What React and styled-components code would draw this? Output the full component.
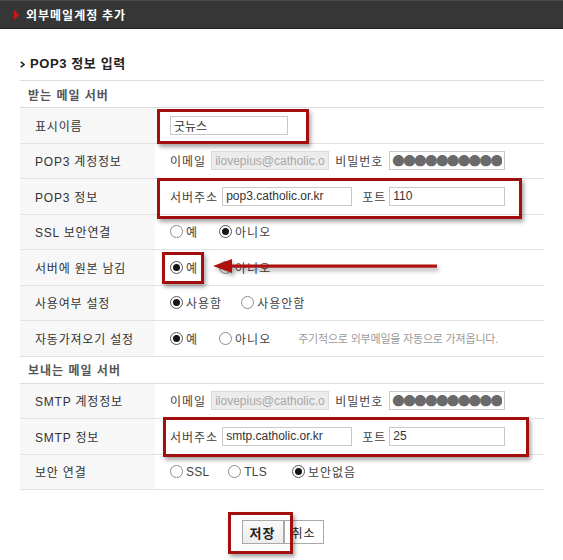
import React from 'react';
import styled, { createGlobalStyle } from 'styled-components';

const Global = createGlobalStyle`
  html, body { margin: 0; padding: 0; background: #fff; overflow: hidden; }
  body {
    font-family: "Liberation Sans", "Noto Sans CJK KR", sans-serif;
    font-size: 12px;
    color: #333;
  }
`;

const Page = styled.div`
  position: relative;
  width: 563px;
  height: 560px;
`;

const TitleBar = styled.div`
  height: 29px;
  box-sizing: border-box;
  background: #363636;
  border-top: 1px solid #4c4c4c;
  border-bottom: 1px solid #1e1e1e;
  display: flex;
  align-items: center;
  padding-left: 14px;
  gap: 7px;
  color: #fff;
  font-weight: bold;
  font-size: 12px;
  letter-spacing: 1px;
  font-family: "Noto Sans CJK KR", sans-serif;
`;

const RedTri = styled.span`
  width: 0;
  height: 0;
  border-left: 5px solid #d41414;
  border-top: 5px solid transparent;
  border-bottom: 5px solid transparent;
`;

const Content = styled.div`
  margin: 0 19px 0 20px;
`;

const SectionTitle = styled.div`
  display: flex;
  align-items: center;
  gap: 5px;
  padding: 27px 0 8px 0;
  line-height: 16px;
  font-size: 13px;
  font-weight: bold;
  letter-spacing: 0.6px;
  color: #222;
  border-bottom: 1px solid #dcdcdc;
`;

const GroupRow = styled.div`
  height: 27px;
  box-sizing: border-box;
  border-bottom: 1px solid #dcdcdc;
  display: flex;
  align-items: center;
  padding-left: 8px;
  font-weight: bold;
  letter-spacing: 1px;
  color: #555;
`;

const Row = styled.div`
  display: grid;
  grid-template-columns: 135px 1fr;
  height: 35.5px;
  box-sizing: border-box;
  border-bottom: 1px solid #e2e2e2;
`;

const Label = styled.div`
  background: #f7f7f7;
  padding-left: 15px;
  display: flex;
  align-items: center;
  letter-spacing: 0.8px;
  color: #333;
`;

const Value = styled.div`
  padding-left: 15px;
  display: flex;
  align-items: center;
  color: #444;
`;

const FieldLabel = styled.span`
  margin-left: ${p => p.$ml || 0}px;
  margin-right: ${p => p.$mr || 5}px;
  letter-spacing: 1px;
  color: #444;
`;

const TextInput = styled.input`
  width: ${p => p.$w}px;
  height: 19px;
  box-sizing: border-box;
  border: 1px solid ${p => (p.$disabled ? '#dadada' : '#c9c9c9')};
  background: ${p => (p.$disabled ? '#ececec' : '#fff')};
  color: ${p => (p.$disabled ? '#a8a8a8' : '#333')};
  padding: 0 3px;
  font-family: "Liberation Sans", "Noto Sans CJK KR", sans-serif;
  font-size: 12px;
  outline: none;
  margin: 0;
`;

const DotsInput = styled(TextInput)`
  font-family: "Noto Sans CJK KR", sans-serif;
  font-size: 12.5px;
  color: #6a6a6a;
  letter-spacing: -1.6px;
  padding: 0 2px;
`;

const Option = styled.span`
  display: inline-flex;
  align-items: center;
  margin-right: ${p => p.$gap || 0}px;
  letter-spacing: ${p => (p.$latin ? 0.2 : 1)}px;
  color: #444;
`;

const Radio = styled.span`
  width: 13px;
  height: 13px;
  box-sizing: border-box;
  border-radius: 50%;
  border: 1px solid ${p => (p.$on ? '#555' : '#8c8c8c')};
  background: #fff;
  display: inline-flex;
  align-items: center;
  justify-content: center;
  margin-right: 3px;
  &::after {
    content: '';
    width: 7px;
    height: 7px;
    border-radius: 50%;
    background: ${p => (p.$on ? '#161616' : 'transparent')};
  }
`;

const Note = styled.span`
  color: #9a9a9a;
  font-size: 11px;
  letter-spacing: -0.2px;
  margin-left: ${p => p.$ml || 0}px;
`;

const Footer = styled.div`
  display: flex;
  justify-content: center;
  margin-top: 30px;
  padding-left: 1px;
`;

const Button = styled.button`
  height: 24px;
  width: ${p => p.$w}px;
  box-sizing: border-box;
  border: 1px solid #a9a9a9;
  background: ${p => (p.$primary ? 'linear-gradient(#fafafa, #ececec)' : '#fff')};
  font-family: "Noto Sans CJK KR", sans-serif;
  font-size: ${p => (p.$primary ? 13 : 12)}px;
  font-weight: ${p => (p.$primary ? 'bold' : 'normal')};
  letter-spacing: 1px;
  color: #222;
  padding: 0;
  margin: 0;
`;

const RedBox = styled.div`
  position: absolute;
  left: ${p => p.$x}px;
  top: ${p => p.$y}px;
  width: ${p => p.$w}px;
  height: ${p => p.$h}px;
  box-sizing: border-box;
  border: 3px solid #a30f0f;
  box-shadow: 2px 3px 4px rgba(0, 0, 0, 0.35);
  pointer-events: none;
`;

const ArrowSvg = styled.svg`
  position: absolute;
  left: 210px;
  top: 256px;
  overflow: visible;
  filter: drop-shadow(2px 3px 2px rgba(0, 0, 0, 0.35));
  pointer-events: none;
`;

const Chevron = () => (
  <svg width="5" height="7" viewBox="0 0 5 7">
    <path d="M0.8 0.8 L4 3.5 L0.8 6.2" fill="none" stroke="#222" strokeWidth="1.6" />
  </svg>
);

const RadioOpt = ({ on, gap, latin, children }) => (
  <Option $gap={gap} $latin={latin}>
    <Radio $on={on} />
    {children}
  </Option>
);

const DOTS = '●●●●●●●●●●●●●●';

export default function App() {
  return (
    <Page>
      <Global />
      <TitleBar>
        <RedTri />
        외부메일계정 추가
      </TitleBar>
      <Content>
        <SectionTitle>
          <Chevron />
          POP3 정보 입력
        </SectionTitle>
        <GroupRow>받는 메일 서버</GroupRow>
        <Row>
          <Label>표시이름</Label>
          <Value>
            <TextInput $w={118} defaultValue="굿뉴스" />
          </Value>
        </Row>
        <Row>
          <Label>POP3 계정정보</Label>
          <Value>
            <FieldLabel>이메일</FieldLabel>
            <TextInput $w={118} $disabled readOnly defaultValue="ilovepius@catholic.or.kr" />
            <FieldLabel $ml={6} $mr={6}>비밀번호</FieldLabel>
            <DotsInput $w={116} readOnly defaultValue={DOTS} />
          </Value>
        </Row>
        <Row>
          <Label>POP3 정보</Label>
          <Value>
            <FieldLabel $mr={4}>서버주소</FieldLabel>
            <TextInput $w={130} defaultValue="pop3.catholic.or.kr" />
            <FieldLabel $ml={10} $mr={3}>포트</FieldLabel>
            <TextInput $w={116} defaultValue="110" />
          </Value>
        </Row>
        <Row>
          <Label>SSL 보안연결</Label>
          <Value>
            <RadioOpt gap={21}>예</RadioOpt>
            <RadioOpt on>아니오</RadioOpt>
          </Value>
        </Row>
        <Row>
          <Label>서버에 원본 남김</Label>
          <Value>
            <RadioOpt on gap={21}>예</RadioOpt>
            <RadioOpt>아니오</RadioOpt>
          </Value>
        </Row>
        <Row>
          <Label>사용여부 설정</Label>
          <Value>
            <RadioOpt on gap={19}>사용함</RadioOpt>
            <RadioOpt>사용안함</RadioOpt>
          </Value>
        </Row>
        <Row>
          <Label>자동가져오기 설정</Label>
          <Value>
            <RadioOpt on gap={21}>예</RadioOpt>
            <RadioOpt>아니오</RadioOpt>
            <Note $ml={27}>주기적으로 외부메일을 자동으로 가져옵니다.</Note>
          </Value>
        </Row>
        <GroupRow>보내는 메일 서버</GroupRow>
        <Row>
          <Label>SMTP 계정정보</Label>
          <Value>
            <FieldLabel>이메일</FieldLabel>
            <TextInput $w={118} $disabled readOnly defaultValue="ilovepius@catholic.or.kr" />
            <FieldLabel $ml={6} $mr={6}>비밀번호</FieldLabel>
            <DotsInput $w={116} readOnly defaultValue={DOTS} />
          </Value>
        </Row>
        <Row>
          <Label>SMTP 정보</Label>
          <Value>
            <FieldLabel $mr={4}>서버주소</FieldLabel>
            <TextInput $w={130} defaultValue="smtp.catholic.or.kr" />
            <FieldLabel $ml={10} $mr={3}>포트</FieldLabel>
            <TextInput $w={116} defaultValue="25" />
          </Value>
        </Row>
        <Row>
          <Label>보안 연결</Label>
          <Value>
            <RadioOpt latin gap={19}>SSL</RadioOpt>
            <RadioOpt latin gap={25}>TLS</RadioOpt>
            <RadioOpt on>보안없음</RadioOpt>
          </Value>
        </Row>
        <Footer>
          <Button $primary $w={42}>저장</Button>
          <Button $w={40}>취소</Button>
        </Footer>
      </Content>

      <RedBox $x={157} $y={109} $w={152} $h={35} />
      <RedBox $x={157} $y={178} $w={365} $h={41} />
      <RedBox $x={162} $y={252} $w={42} $h={32} />
      <RedBox $x={163} $y={417} $w={366} $h={40} />
      <RedBox $x={228} $y={512} $w={65} $h={42} />
      <ArrowSvg width="230" height="20" viewBox="0 0 230 20">
        <polygon points="3,10 22,3 22,17" fill="#b01010" />
        <rect x="20" y="8.5" width="207" height="3.2" fill="#b01010" />
      </ArrowSvg>
    </Page>
  );
}
